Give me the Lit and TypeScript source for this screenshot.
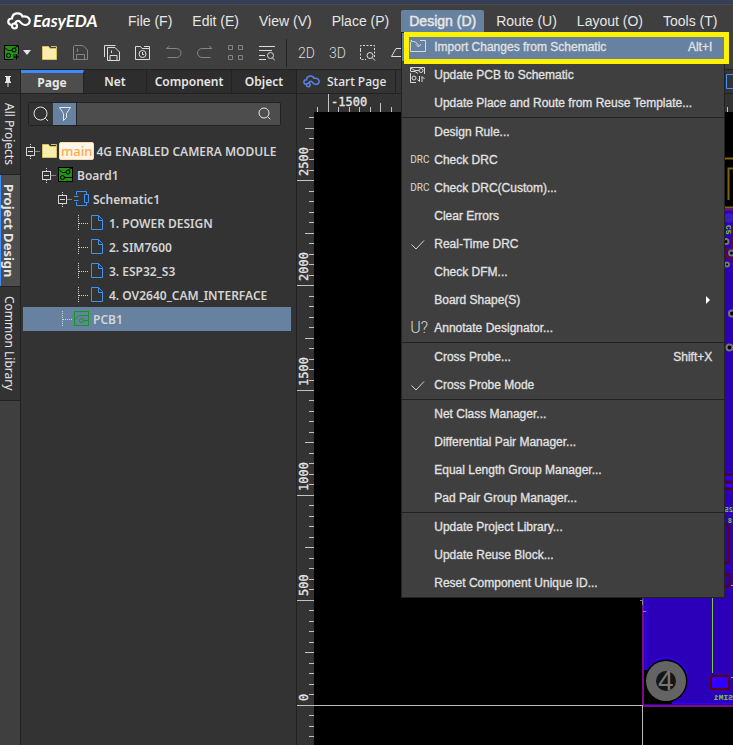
import { LitElement, html, svg, css, nothing, TemplateResult } from "lit";
import { customElement, state } from "lit/decorators.js";
import { classMap } from "lit/directives/class-map.js";

/* ---------- icons ---------- */

const icon = (body: unknown, w = 16, h = 16) => html`<svg
  class="icon" width=${w} height=${h} viewBox="0 0 ${w} ${h}" fill="none"
  stroke="currentColor" aria-hidden="true">${body}</svg>`;

const boardIcon = icon(svg`
  <rect x="0.5" y="0.5" width="14" height="14" fill="#23930f" stroke="#000"/>
  <path d="M1 2.5 4 5.5H8M14.5 10.5H6.500M11 2.500l3-1.500" stroke="#000"/>
  <circle cx="10" cy="5" r="2" stroke="#000"/><circle cx="4.500" cy="10.500" r="2" stroke="#000"/>`);
const newBoardIcon = icon(svg`
  <rect x="0" y="0" width="15" height="15" fill="#23930f" stroke="none"/>
  <path d="M0.5 15V0.500H14.500V9M0 14.500H9M1 2.500 4 5.500H8M11 3l3-2" stroke="#000"/>
  <circle cx="10" cy="5" r="2" stroke="#000"/><circle cx="4.500" cy="10.500" r="2" stroke="#000"/>
  <rect x="9" y="9" width="7" height="7" fill="#3f3f3f" stroke="none"/>
  <path d="M12.500 9.500v5M10 12h5" stroke="#000"/>`);
const folderIcon = icon(svg`
  <path d="M0.5 1.500H6.500L8 3.500H14.500V14.500H0.500Z" fill="#f7eeae" stroke="#d9c165"/>
  <path d="M9 1.500H14.500V3.500" stroke="#d9c165"/>`);
const saveIcon = icon(svg`
  <path d="M1.500 0.500H10L14.500 5V14.500H0.500V1.500ZM3.500 14.500V9.500H11.500V14.500M4.500 3.500V7"/>`);
const saveAllIcon = icon(svg`
  <path d="M3.500 2.500H11L15.500 7V15.500H3.500ZM0.500 12V0.500H11.500M6 15.500V10.500H13V15.500M7.500 5.500V8"/>`);
const historyIcon = icon(svg`
  <path d="M0.500 14.500V1.500H5.500L7 3.500H14.500V14.500ZM9 1.500h5.500v2"/><circle cx="7.500" cy="9" r="3.500"/>
  <path d="M7.500 7V9.500H9"/>`);
const undoIcon = icon(svg`<path d="M3.500 1 0.500 3.500H10.500A4.500 4.500 0 0 1 10.500 12.500H1.500"/>`);
const redoIcon = icon(svg`<path d="M12 1 15 3.500H5A4.500 4.500 0 0 0 5 12.500H13.500"/>`);
const gridIcon = icon(svg`
  <path d="M0.500 0.500h4v4h-4ZM10.500 0.500h4v4h-4ZM0.500 10.500h4v4h-4ZM10.500 10.500h4v4h-4Z"/>`);
const listFindIcon = icon(svg`
  <path d="M0 1.500H16M0 5.500H13M0 10.500H6M0 14.500H7M13.500 13l2.500 2.500"/><circle cx="11.500" cy="10.500" r="3"/>`);
const areaZoomIcon = icon(svg`
  <path d="M0.500 5V0.500H14.500V12M0.500 5V14.500H6" stroke-dasharray="2 1.500"/>
  <circle cx="10" cy="10.500" r="3"/><path d="M12.500 13l2.500 2.500"/>`);
const clearIcon = icon(svg`<path d="M0.500 11.500 5 3.500H16M0.500 11.500H16"/>`);
const funnelIcon = icon(svg`<path d="M2.500 1.500H13.500L9.500 7.500V11.500L6.500 14.500V7.500Z"/>`);
const lens = (r: number) => icon(svg`<circle cx=${r + 1} cy=${r + 1} r=${r}/>
  <path d="M${r * 1.75 + 1} ${r * 1.75 + 1}l2.500 2.500"/>`, r * 2 + 4, r * 2 + 4);
const pinIcon = icon(svg`
  <path d="M2 0h6v1H7v4l1 1v1H2V6l1-1V1H2ZM4.500 7h1v4h-1Z" fill="currentColor" stroke="none"/>`, 10, 12);
const schematicIcon = icon(svg`
  <path d="M2.500 4V0.500H12.500V3M2.500 11V14.500H12.500V12M0 5.500H4.500M0 9.500H4.500M10.500 3.500h4v8h-4Z"/>`);
const pageIcon = icon(svg`<path d="M1.500 0.500H8.500L12.500 4.500V14.500H1.500ZM8.500 0.500V5.500H12.500"/>`);
const pcbIcon = icon(svg`
  <rect x="0.500" y="0.500" width="14" height="14"/><path d="M0.500 9 5 4.500H14.500M9.500 9.500H15"/>
  <circle cx="7.500" cy="9.500" r="2"/>`);
const importIcon = icon(svg`
  <path d="M0.500 3V12.500H15.500V1.500H10M0.500 1.500H2M1 2.500C5 2 8 4 8.500 7.500M6 5.500 8.500 8 11 5"/>`);
const syncIcon = icon(svg`
  <path d="M0.500 4V0.500H14.500V7M0.500 4.500H5L8 6.500M0.500 6V15.500H6M0.500 1 5 3.500H9M9.500 9v5.500L7.500 12.500M12 15V9.500L14.500 12"/>
  <circle cx="11" cy="3.500" r="2"/><circle cx="4" cy="11" r="2"/>`);
const checkIcon = icon(svg`<path d="M1.500 8.500 6 13 14 4.500"/>`);

const cloud = (w: number, h: number) => html`<svg class="icon" width=${w} height=${h}
  viewBox="0 0 24 18" fill="none" stroke="currentColor" stroke-width="2.200" stroke-linecap="round" aria-hidden="true">
  <path d="M5 13C0 13 0 6.500 5 6.500C5.500 0 14 0 15.500 4.500C21 3.500 23.500 7 22.500 10C22 12 20 13 18 13C14.500 13 14 10 12 9C10.500 8.500 8.500 9.500 8 11.500"/>
  <circle cx="7.500" cy="14" r="2.500"/></svg>`;

/* ---------- data ---------- */

const MENUS = ["File (F)", "Edit (E)", "View (V)", "Place (P)", "Design (D)", "Route (U)", "Layout (O)", "Tools (T)"];

interface Item { label: string; icon?: unknown; keys?: string; sub?: boolean; active?: boolean }

const drc = html`<span class="drc">DRC</span>`;
const GROUPS: Item[][] = [
  [
    { label: "Import Changes from Schematic", icon: importIcon, keys: "Alt+I", active: true },
    { label: "Update PCB to Schematic", icon: syncIcon },
    { label: "Update Place and Route from Reuse Template..." },
  ],
  [
    { label: "Design Rule..." },
    { label: "Check DRC", icon: drc },
    { label: "Check DRC(Custom)...", icon: drc },
    { label: "Clear Errors" },
    { label: "Real-Time DRC", icon: checkIcon },
    { label: "Check DFM..." },
    { label: "Board Shape(S)", sub: true },
    { label: "Annotate Designator...", icon: html`<span class="annot">U?</span>` },
  ],
  [
    { label: "Cross Probe...", keys: "Shift+X" },
    { label: "Cross Probe Mode", icon: checkIcon },
  ],
  [
    { label: "Net Class Manager..." },
    { label: "Differential Pair Manager..." },
    { label: "Equal Length Group Manager..." },
    { label: "Pad Pair Group Manager..." },
  ],
  [
    { label: "Update Project Library..." },
    { label: "Update Reuse Block..." },
    { label: "Reset Component Unique ID..." },
  ],
];

interface Node { label: string; level: number; icon: unknown; tone: string; leaf?: boolean; tag?: string }

const TREE: Node[] = [
  { label: "4G ENABLED CAMERA MODULE", level: 0, icon: folderIcon, tone: "", tag: "main" },
  { label: "Board1", level: 1, icon: boardIcon, tone: "" },
  { label: "Schematic1", level: 2, icon: schematicIcon, tone: "blue" },
  { label: "1. POWER DESIGN", level: 3, icon: pageIcon, tone: "blue", leaf: true },
  { label: "2. SIM7600", level: 3, icon: pageIcon, tone: "blue", leaf: true },
  { label: "3. ESP32_S3", level: 3, icon: pageIcon, tone: "blue", leaf: true },
  { label: "4. OV2640_CAM_INTERFACE", level: 3, icon: pageIcon, tone: "blue", leaf: true },
  { label: "PCB1", level: 2, icon: pcbIcon, tone: "green", leaf: true },
];

/* ---------- menu ---------- */

@customElement("design-menu")
export class DesignMenu extends LitElement {
  static styles = css`
    :host { display: block; box-sizing: border-box; width: 324px; background: #3f3f3f; border: 1px solid #222; font: 12px/28px "Liberation Sans", Arial, sans-serif; color: #e2e2e2; }
    .group + .group { border-top: 1px solid #222; }
    .item { display: flex; align-items: center; width: 100%; height: 28px; padding: 0 12px 0 8px; border: 0; background: none; color: inherit; font: inherit; text-align: left; -webkit-text-stroke: 0.3px currentColor; }
    .item.active { background: #6782a0; }
    .slot { display: flex; width: 24px; color: #d8d8d8; -webkit-text-stroke: 0; }
    .label { flex: 1; white-space: nowrap; }
    .drc { font: 10px/16px Roboto, sans-serif; }
    .annot { font: 300 16px/16px Roboto, sans-serif; }
    .arrow { width: 0; border: 4px solid transparent; border-left: 4px solid #fff; border-right: 0; margin-right: 2px; }
    .icon { display: block; flex: none; }
  `;
  render() {
    return html`<div role="menu">${GROUPS.map((g) => html`<div class="group" role="group">${g.map((i) => html`
      <button class=${classMap({ item: true, active: !!i.active })} role="menuitem">
        <span class="slot">${i.icon ?? nothing}</span><span class="label">${i.label}</span>
        ${i.keys ? html`<span>${i.keys}</span>` : nothing}${i.sub ? html`<span class="arrow"></span>` : nothing}
      </button>`)}</div>`)}</div>`;
  }
}

/* ---------- project tree ---------- */

@customElement("project-tree")
export class ProjectTree extends LitElement {
  static styles = css`
    :host { display: block; font: 600 12px/24px "Noto Sans", "Open Sans", sans-serif; color: #d4d4d4; }
    .row { display: flex; align-items: center; height: 24px; margin: 0 5px 0 2px; padding-left: 3px; white-space: nowrap; }
    .row.selected { background: #6782a0; }
    .l1 { padding-left: 19px; } .l2 { padding-left: 35px; } .l3 { padding-left: 51px; }
    .icon { display: block; flex: none; }
    .kind { margin-right: 3px; flex: none; }
    .label { padding-top: 1px; }
    .tag { background: #fff5e8; border: 1px solid #ffd9a8; border-radius: 2px; color: #ffa94d; font: 500 13px/16px "Noto Sans", sans-serif; padding: 0 1px; margin: 0 2px 0 -2px; }
    .blue { color: #3d93f5; } .green { color: #109a20; }
  `;
  private joint(leaf?: boolean): TemplateResult {
    return leaf
      ? icon(svg`<path d="M4.500 0V16M5 8.500H14" stroke-dasharray="1 1"/>`)
      : icon(svg`<rect x="0.500" y="4.500" width="8" height="8"/><path d="M2 8.500h5"/>
          <path d="M4.500 1V4M4.500 13v3M9.500 8.500H14" stroke-dasharray="1 1"/>`);
  }
  render() {
    return html`<div role="tree">${TREE.map((n) => html`
      <div role="treeitem" class="row l${n.level} ${n.label === "PCB1" ? "selected" : ""}">
        ${this.joint(n.leaf)}<span class="kind ${n.tone}">${n.icon}</span>${n.tag ? html`<span class="tag">${n.tag}</span>` : nothing}<span class="label">${n.label}</span>
      </div>`)}</div>`;
  }
}

/* ---------- board canvas with rulers ---------- */

@customElement("board-canvas")
export class BoardCanvas extends LitElement {
  static styles = css`
    :host { display: grid; grid-template: 18px 1fr / 17px 1fr; min-width: 0; min-height: 0; background: #333; }
    .top { grid-column: 1 / 3; } .corner { grid-row: 2; }
    svg { display: block; width: 100%; height: 100%; overflow: hidden; }
    .num { font: 12px "DejaVu Sans Mono", monospace; fill: #e6e6e6; stroke: #e6e6e6; stroke-width: 0.3px; }
    .silk { font: bold 8px "Liberation Mono", monospace; fill: #7ac943; }
    .small { font-size: 7px; }
    .hole { font: 28px "Liberation Sans", sans-serif; fill: #777; }
    .board { background: #000; }
  `;
  render() {
    const ticks = Array.from({ length: 62 }, (_, i) => i);
    return html`
      <svg class="top" aria-hidden="true"><g transform="translate(-297,-94)" fill="#c4c4c4">
        ${ticks.map((i) => {
          const x = Math.round(317 + i * 10.5), k = (i + 9) % 10;
          const h = k === 0 ? 18 : k === 5 ? 9 : 5;
          return svg`<rect x=${x} y=${112 - h} width="1" height=${h}/>`;
        })}
        <text class="num" x="331" y="106">-1500</text></g></svg>
      <svg class="corner" aria-hidden="true"><g transform="translate(-297,-112)" fill="#c4c4c4">
        ${ticks.map((i) => {
          const y = Math.round(704.7 + (4 - i) * 10.49), k = (i + 6) % 10;
          const w = k === 0 ? 17 : k === 5 ? 9 : 5;
          return y > 112 ? svg`<rect x=${314 - w} y=${y} width=${w} height="1"/>` : nothing;
        })}
        ${[0, 500, 1000, 1500, 2000, 2500].map((n) => svg`<text class="num" transform="translate(308 ${Math.round(701 - n * 0.21)}) rotate(-90)">${n}</text>`)}
      </g></svg>
      <svg class="board" role="img" aria-label="PCB1 layout"><g transform="translate(-314,-112)">
        <path d="M722 158.500H760M728.500 200V168.500H760" stroke="#80640c" stroke-width="2" fill="none"/>
        <rect x="643" y="209" width="200" height="496" fill="#2b00b8"/>
        <path d="M644 670V659.500H666A21.500 21.500 0 1 1 672 702.500V705H644Z" fill="#2b00b8"/>
        <path d="M646 599V670M655 660.500A23 23 0 0 1 688 674M671 703.500H760" stroke="#3000ff" fill="none"/>
        <path d="M643 207.500H760" stroke="#80640c" stroke-width="2"/>
        <path d="M644 670H647L672 700V704H644Z" fill="#000"/>
        <path d="M760 209.500H643V706H760" stroke="#7a1080" stroke-width="2" fill="none"/>
        <circle cx="729" cy="218" r="5" fill="#3a1cc4"/>
        <path d="M727 233l6-2v-5M732 236v16l-6-4M725 253c3 6 4 5 8 6" stroke="#7d0505" stroke-width="2" fill="none"/>
        <g fill="#000" stroke="#777" stroke-width="2"><circle cx="726" cy="241.500" r="2.500"/><circle cx="731.500" cy="253" r="2.500"/><circle cx="727" cy="264.500" r="2"/><circle cx="732" cy="313.500" r="3"/><circle cx="729.500" cy="347.500" r="3"/></g>
        <path d="M724 474.500H760M724 482H760M724 489H760M724 524q5 0 5 6v28q0 6-5 6M724 574.500h5.500v12H724" stroke="#5c0010" stroke-width="2" fill="none"/>
        <path d="M725 478H760M725 485.500H760" stroke="#3000ff" stroke-width="3"/>
        <g transform="translate(733 512) scale(-1 1)"><text class="silk small">25</text></g>
        <g transform="translate(732 523) scale(-1 1)"><text class="silk small">8</text></g>
        <g transform="translate(726 225) rotate(90)"><text class="silk">C5</text></g>
        <path d="M712.500 598V673M731 585.500h4M731 677.500h4" stroke="#7ac943"/>
        <rect x="711" y="676" width="18" height="13" rx="1" fill="#3000ff" stroke="#5c0010" stroke-width="2"/>
        <g transform="translate(733 700) scale(-1 1)"><text class="silk">SIM1</text></g>
        <circle cx="666" cy="681" r="21.500" fill="#000"/><circle cx="666" cy="681" r="20" fill="#646464"/>
        <circle cx="666" cy="681" r="10" fill="#151515"/><text class="hole" x="658" y="690">4</text>
        <path d="M640 600.500h2.500V605M643 611.500h3" stroke="#888" fill="none"/>
        <path d="M314 705.500H643M642.500 706V2000" stroke="#bdbdbd"/>
      </g></svg>`;
  }
}

/* ---------- shell ---------- */

@customElement("app-root")
export class AppRoot extends LitElement {
  @state() private open = "Design (D)";

  static styles = css`
    :host { display: flex; flex-direction: column; min-height: 100vh; background: #333; color: #e6e6e6; font: 500 13px/16px "Noto Sans", "Open Sans", sans-serif; overflow: hidden; }
    button, input { font: inherit; color: inherit; border: 0; background: none; padding: 0; margin: 0; }
    .icon { display: block; flex: none; }
    header { background: #3f3f3f; border-top: 4px solid #353e57; border-bottom: 1px solid #222; }
    .menubar { display: flex; height: 32px; align-items: center; border-top: 1px solid #4a4a4a; box-sizing: border-box; padding-left: 7px; }
    .brand { display: flex; align-items: center; gap: 2px; width: 113px; color: #fff; font: italic 700 17px/22px Lato, sans-serif; }
    .menus { display: flex; gap: 4px; }
    .menu { position: relative; }
    .menu > button { display: block; padding: 0 8px; font: 14px/22px "Liberation Sans", Arial, sans-serif; white-space: nowrap; border-radius: 2px 2px 0 0; }
    .menu > .open { background: #6782a0; -webkit-text-stroke: 0.5px currentColor; }
    design-menu { position: absolute; z-index: 2; left: 0; top: 22px; }
    .callout { position: absolute; z-index: 3; left: 3px; top: 22px; width: 325px; height: 32px; box-sizing: border-box; border: 5px solid #fff200; pointer-events: none; }
    .toolbar { display: flex; height: 33px; align-items: center; gap: 15px; padding-left: 4px; color: #dcdcdc; overflow: hidden; }
    .toolbar button { display: flex; flex: none; width: 16px; }
    .dim { color: #858585; }
    .toolbar .new { align-items: center; gap: 3px; width: 27px; margin-right: -4px; }
    .caret { border: 4px solid transparent; border-top: 5px solid #e6e6e6; border-bottom: 0; }
    .sep { width: 1px; height: 28px; background: #222; margin: 0 -4px; }
    .toolbar .dim3 { font: 300 14px/16px Roboto, sans-serif; }
    .main { display: flex; flex: 1; min-height: 0; }
    .rail { width: 21px; flex: none; box-sizing: border-box; background: #3f3f3f; border-right: 1px solid #222; display: flex; flex-direction: column; }
    .pin { height: 24px; display: flex; align-items: center; justify-content: center; border-bottom: 1px solid #222; background: #333; box-sizing: border-box; padding-right: 4px; }
    .rail .side { writing-mode: vertical-rl; background: #333; border-bottom: 1px solid #222; padding: 9px 3px 9px 1px; font: 400 12px/16px "Noto Sans", sans-serif; white-space: nowrap; }
    .rail .side.on { background: #4d4d4d; box-shadow: inset 1px 0 #3d8bff; font-weight: 700; font-size: 13px; }
    .panel { width: 276px; flex: none; box-sizing: border-box; border-right: 1px solid #222; }
    .tabs { display: grid; grid-template-columns: 63fr 63fr 85fr 64fr; height: 24px; box-sizing: border-box; border-bottom: 1px solid #222; background: #2d2d2d; }
    .tabs button { border-right: 1px solid #222; font-size: 12px; font-weight: 600; }
    .tabs button:last-child { border-right: 0; }
    .tabs .on { background: #4d4d4d; border-top: 3px solid #3d8bff; font-weight: 700; }
    .search { display: flex; align-items: center; height: 24px; margin: 8px 15px 13px 7px; box-sizing: border-box; border: 1px solid #222; border-radius: 2px; background: #4d4d4d; }
    .search button { display: flex; align-items: center; justify-content: center; width: 24px; height: 22px; flex: none; }
    .search .plain { background: #333; }
    .search .filter { background: #6782a0; border-right: 1px solid #222; }
    .search input { flex: 1; min-width: 0; outline: 0; }
    .search .go { width: 30px; }
    .work { flex: 1; min-width: 0; display: flex; flex-direction: column; }
    .docs { display: flex; height: 24px; box-sizing: border-box; border-bottom: 1px solid #222; }
    .docs button { display: flex; flex: none; align-items: center; gap: 7px; padding: 0 9px 0 6px; border-right: 1px solid #222; font-size: 12px; }
    .docs .file { margin-left: auto; padding: 0 0 0 12px; width: 20px; overflow: hidden; border: 0; color: #3d93f5; }
    .bluecloud { color: #5b7fe8; }
    board-canvas { flex: 1; }
  `;

  private tool(label: string, body: unknown, cls = "") {
    return html`<button class=${cls} aria-label=${label}>${body}</button>`;
  }

  render() {
    return html`
      <header>
        <div class="menubar">
          <div class="brand">${cloud(24, 18)}<span>EasyEDA</span></div>
          <nav class="menus">${MENUS.map((m) => html`<div class="menu">
            <button class=${m === this.open ? "open" : ""} @click=${() => (this.open = m)}>${m}</button>
            ${m === "Design (D)" && m === this.open ? html`<design-menu></design-menu><div class="callout"></div>` : nothing}
          </div>`)}</nav>
        </div>
        <div class="toolbar">
          ${this.tool("New", html`${newBoardIcon}<span class="caret"></span>`, "new")}
          ${this.tool("Open", folderIcon)} ${this.tool("Save", saveIcon, "dim")}
          ${this.tool("Save all", saveAllIcon)} ${this.tool("History", historyIcon)}
          ${this.tool("Undo", undoIcon, "dim")} ${this.tool("Redo", redoIcon, "dim")}
          ${this.tool("Grid", gridIcon, "dim")} ${this.tool("Find", listFindIcon)}
          <span class="sep"></span>
          <button class="dim3">2D</button><button class="dim3">3D</button>
          ${this.tool("Zoom to area", areaZoomIcon)} ${this.tool("Clear", clearIcon)}
        </div>
      </header>
      <div class="main">
        <aside class="rail">
          <button class="pin" aria-label="Pin">${pinIcon}</button>
          <button class="side">All Projects</button><button class="side on">Project Design</button><button class="side">Common Library</button>
        </aside>
        <section class="panel">
          <div class="tabs"><button class="on">Page</button><button>Net</button><button>Component</button><button>Object</button></div>
          <div class="search">
            <button class="plain" aria-label="Find">${lens(6.5)}</button><button class="filter" aria-label="Filter">${funnelIcon}</button>
            <input aria-label="Search" /><button class="go" aria-label="Search">${lens(5)}</button>
          </div>
          <project-tree></project-tree>
        </section>
        <section class="work">
          <div class="docs"><button><span class="bluecloud">${cloud(17, 13)}</span>Start Page</button><button class="file" aria-label="Page">${pageIcon}</button></div>
          <board-canvas></board-canvas>
        </section>
      </div>`;
  }
}
